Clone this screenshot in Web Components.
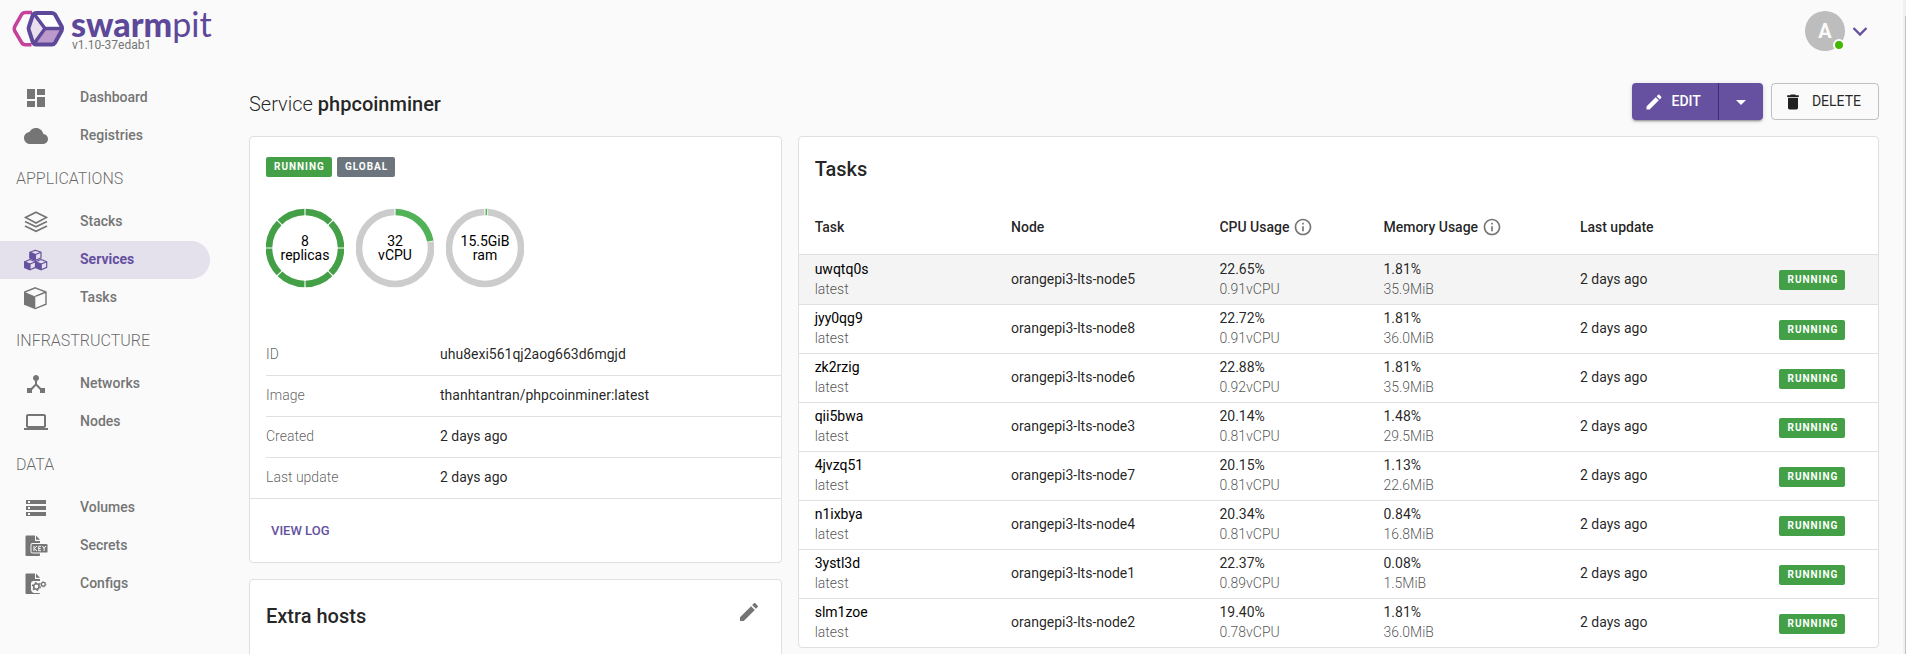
<!DOCTYPE html>
<html lang="en">
<head>
<meta charset="utf-8">
<title>Swarmpit - Service phpcoinminer</title>
<style>
  html, body { margin: 0; height: 100%; background: #fafafa; overflow: hidden; }
  body { font: 400 14px/20px Roboto, sans-serif; color: rgba(0,0,0,.87); }
</style>
</head>
<body>
<sp-app></sp-app>

<template id="t-app">
  <style>
    :host { display: grid; grid-template-columns: minmax(0, 1fr) 3px; height: 100%; overflow: hidden; }
    .page { min-height: 0; overflow: hidden; }
    .track { background: #f0f0f0; padding: 16px 0 0 2px; display: grid; }
    .thumb { background: #c1c1c1; }
    .top { box-sizing: border-box; display: flex; justify-content: space-between; padding: 10px 31px 0 12px; height: 52px; }
    .body { display: grid; grid-template-columns: 210px minmax(0, 1fr); column-gap: 39px; padding-right: 24px; }
    sp-nav { margin-top: 27px; }
    .bar { display: flex; align-items: center; gap: 8px; height: 37px; margin: 31px 0 16px; }
    h1 { flex: 1; margin: 0; font: 500 20px/24px Roboto, sans-serif; padding-top: 4px; }
    h1 span { font-weight: 300; }
    .grid { display: grid; grid-template-columns: repeat(12, minmax(0, 1fr)); gap: 16px; align-items: start; }
    .left { grid-column: span 4; display: grid; gap: 16px; }
    .right { grid-column: span 8; }
    .hosts { display: flex; align-items: flex-start; justify-content: space-between; padding: 12px 12px 60px 16px; }
    h2 { margin: 0; padding-top: 4px; font: 500 20px/40px Roboto, sans-serif; }
    .icon { border: 0; padding: 8px; background: none; color: #757575; display: flex; }
  </style>
  <div class="page">
  <header class="top"><sp-brand version="v1.10-37edab1"></sp-brand><sp-account letter="A"></sp-account></header>
  <div class="body">
    <sp-nav></sp-nav>
    <main>
      <div class="bar">
        <h1><span>Service</span> phpcoinminer</h1>
        <sp-split-button>Edit</sp-split-button>
        <sp-delete-button>Delete</sp-delete-button>
      </div>
      <div class="grid">
        <div class="left">
          <sp-card><sp-service></sp-service></sp-card>
          <sp-card><div class="hosts"><h2>Extra hosts</h2><button class="icon" aria-label="Edit extra hosts"><sp-icon name="edit"></sp-icon></button></div></sp-card>
        </div>
        <sp-card class="right"><sp-tasks></sp-tasks></sp-card>
      </div>
    </main>
  </div>
  </div>
  <div class="track"><div class="thumb"></div></div>
</template>

<template id="t-brand">
  <style>
    :host { display: flex; gap: 6px; }
    svg { width: 53px; height: 38px; display: block; }
    .txt { display: flex; flex-direction: column; }
    .word { font: 900 34px/28px Lato, sans-serif; color: #5d4899; height: 31px; }
    .word span { font-weight: 400; }
    .ver { font-size: 12px; line-height: 14px; color: #757575; padding-left: 1px; }
  </style>
  <svg viewBox="0 0 53 38" aria-hidden="true">
    <path d="M20 2.500H13.500Q10.800 2.500 9.500 4.700L3 16Q1.600 18.700 3 21.400L9.500 32.400Q10.800 34.700 13.500 34.700H19.500" fill="none" stroke="#c5429a" stroke-width="3.600"/>
    <path d="M18 5 16.500 18.500 27 32.500 40 34 50 18.500 40 4Z" fill="#fff"/>
    <path d="M21 6 16.800 18.500 22.500 31 33 18.500 24 5Z" fill="#e8deee"/>
    <path d="M33 18.500H49L41 33H24Z" fill="#bb9acb"/>
    <path d="M24 2.900H40Q42 2.900 43 4.600L49.700 16.500Q50.700 18.500 49.700 20.500L43 32.700Q42 34.400 40 34.400H24Q22 34.400 21 32.700L17 20.500Q16 18.500 17 16.500L21 4.600Q22 2.900 24 2.900Z" fill="none" stroke="#5d4899" stroke-width="4"/>
    <path d="M22.500 4.500 33 18.500 22.500 33M33 18.500H50" fill="none" stroke="#5d4899" stroke-width="3.400"/>
  </svg>
  <div class="txt"><div class="word">swarm<span>pit</span></div><div class="ver"></div></div>
</template>

<template id="t-account">
  <style>
    :host { display: block; }
    button { display: flex; align-items: center; gap: 3px; border: 0; padding: 0; background: none; color: #65519f; }
    .av { position: relative; width: 40px; height: 40px; margin-top: 1px; border-radius: 50%; background: #bdbdbd; color: #fafafa; font: 700 20px/41px Roboto, sans-serif; text-align: center; }
    .dot { position: absolute; right: 0; bottom: 0; width: 8px; height: 8px; border: 2px solid #fff; border-radius: 50%; background: #44b700; }
  </style>
  <button aria-label="Account"><span class="av"><span class="l"></span><span class="dot"></span></span><sp-icon name="chevron"></sp-icon></button>
</template>

<template id="t-nav">
  <style>
    :host { display: block; }
    nav { display: flex; flex-direction: column; }
    h3 { margin: 0; padding-left: 16px; font: 300 16px/47px Roboto, sans-serif; height: 48px; color: rgba(0,0,0,.6); text-transform: uppercase; }
    a { display: flex; align-items: center; gap: 32px; height: 38px; padding-left: 24px; border-radius: 0 19px 19px 0; color: #757575; font-weight: 500; text-decoration: none; }
    a span { padding-bottom: 2px; }
    a[aria-current] { background: #e4e0ec; color: #65519f; font-weight: 700; }
  </style>
  <nav></nav>
</template>

<template id="t-split">
  <style>
    :host { display: flex; border-radius: 4px; background: #65519f; box-shadow: 0 3px 1px -2px rgba(0,0,0,.2), 0 2px 2px rgba(0,0,0,.14), 0 1px 5px rgba(0,0,0,.12); }
    button { display: flex; align-items: center; justify-content: center; height: 37px; border: 0; background: none; color: #fff; font: 500 14px/24px Roboto, sans-serif; text-transform: uppercase; }
    .main { gap: 8px; padding: 0 17px 0 12px; border-right: 1px solid #3a2a80; }
    .more { width: 44px; padding: 0; }
    span { padding-bottom: 2px; }
  </style>
  <button class="main"><sp-icon name="edit" size="20"></sp-icon><span><slot></slot></span></button><button class="more" aria-label="More actions"><sp-icon name="drop"></sp-icon></button>
</template>

<template id="t-delete">
  <style>
    :host { display: block; }
    button { display: flex; align-items: center; gap: 9px; height: 37px; padding: 0 17px 0 11px; border: 1px solid rgba(0,0,0,.23); border-radius: 4px; background: none; color: rgba(0,0,0,.87); font: 400 14px/24px Roboto, sans-serif; text-transform: uppercase; }
    span { padding-bottom: 2px; }
  </style>
  <button><sp-icon name="trash" size="20"></sp-icon><span><slot></slot></span></button>
</template>

<template id="t-card">
  <style>:host { display: block; background: #fff; border: 1px solid #e0e0e0; border-radius: 4px; }</style>
  <slot></slot>
</template>

<template id="t-badge">
  <style>
    :host { display: inline-block; padding: 0 7px 0 8px; border-radius: 2px; background: #43a047; color: #fff; font: 700 10px/20px Roboto, sans-serif; letter-spacing: 1px; text-transform: uppercase; }
    :host([tone="grey"]) { background: #6c757d; }
  </style>
  <slot></slot>
</template>

<template id="t-ring">
  <style>
    :host { display: grid; width: 78px; height: 80px; place-items: center; color: #000; }
    svg, div { grid-area: 1 / 1; }
    svg { width: 78px; height: 80px; }
    div { font-size: 14px; line-height: 14px; text-align: center; white-space: pre-line; }
  </style>
  <svg viewBox="0 0 78 80" preserveAspectRatio="none" aria-hidden="true"></svg><div></div>
</template>

<template id="t-service">
  <style>
    :host { display: block; }
    .tags { display: flex; gap: 5px; padding: 20px 16px 0; }
    .rings { display: flex; gap: 12px; padding: 31px 16px 47px; }
    table { width: 100%; border-collapse: separate; border-spacing: 0; }
    th, td { box-sizing: border-box; padding: 0 0 2px; height: 41px; border-bottom: 1px solid #e0e0e0; text-align: left; vertical-align: middle; font-weight: 400; }
    th { width: 174px; color: rgba(0,0,0,.65); font-weight: 300; }
    .wrap { padding-left: 16px; border-bottom: 1px solid #e0e0e0; }
    tr:last-child > * { height: 40px; border-bottom: 0; }
    .act { padding: 13px; }
    a { display: inline-block; padding: 8px; color: #65519f; font-weight: 500; font-size: 13px; line-height: 21px; text-decoration: none; text-transform: uppercase; }
  </style>
  <div class="tags"><sp-badge>Running</sp-badge><sp-badge tone="grey">Global</sp-badge></div>
  <div class="rings"><sp-ring kind="replicas" top="8" bottom="replicas"></sp-ring><sp-ring value="22" top="32" bottom="vCPU"></sp-ring><sp-ring value="1" top="15.5GiB" bottom="ram"></sp-ring></div>
  <div class="wrap"><table>
    <tr><th scope="row">ID</th><td>uhu8exi561qj2aog663d6mgjd</td></tr>
    <tr><th scope="row">Image</th><td>thanhtantran/phpcoinminer:latest</td></tr>
    <tr><th scope="row">Created</th><td>2 days ago</td></tr>
    <tr><th scope="row">Last update</th><td>2 days ago</td></tr>
  </table></div>
  <div class="act"><a href="#log">View log</a></div>
</template>

<template id="t-tasks">
  <style>
    :host { display: block; }
    h2 { margin: 0; padding: 12px 16px; font: 500 20px/40px Roboto, sans-serif; }
    table { width: 100%; table-layout: fixed; border-collapse: separate; border-spacing: 0; }
    th, td { box-sizing: border-box; padding: 0 16px 2px; text-align: left; border-bottom: 1px solid #e0e0e0; }
    th { height: 54px; font-weight: 500; }
    th span { display: flex; align-items: center; gap: 4px; }
    td { height: 49px; vertical-align: middle; }
    tbody tr:first-child td { height: 50px; }
    tbody tr:last-child td { height: 48px; border-bottom: 0; }
    td:last-child { padding: 0 17px; }
    td b, td small { display: block; font-size: 14px; line-height: 20px; font-weight: 400; }
    td:first-child b { color: #000; }
    td small { font-weight: 300; color: rgba(0,0,0,.7); }
    tbody tr:first-child { background: #f4f4f4; }
    sp-icon { color: #757575; }
    sp-badge { vertical-align: middle; }
  </style>
  <h2>Tasks</h2>
  <table>
    <colgroup><col style="width:18.2%"><col style="width:19.3%"><col style="width:15.2%"><col style="width:18.2%"><col style="width:18.4%"><col></colgroup>
    <thead><tr><th>Task</th><th>Node</th><th><span>CPU Usage <sp-icon name="info" size="20"></sp-icon></span></th><th><span>Memory Usage <sp-icon name="info" size="20"></sp-icon></span></th><th>Last update</th><th></th></tr></thead>
    <tbody></tbody>
  </table>
</template>

<script>
  const ICONS = {
    dashboard: '<path d="M3 13h8V3H3v10zm0 8h8v-6H3v6zm10 0h8V11h-8v10zm0-18v6h8V3h-8z"/>',
    cloud: '<path d="M19.350 10.040C18.670 6.590 15.640 4 12 4 9.110 4 6.600 5.640 5.350 8.040 2.340 8.360 0 10.910 0 14c0 3.310 2.690 6 6 6h13c2.760 0 5-2.240 5-5 0-2.640-2.050-4.780-4.650-4.960z"/>',
    stacks: '<path d="M12 2.200 22.500 7.500 12 13 1.500 7.500ZM1 11.500l11 5.300 11-5.300M1 16l11 5.300L23 16" fill="none" stroke="currentColor" stroke-width="1.600"/>',
    services: '<g stroke="currentColor" stroke-width="1.200" stroke-linejoin="round"><path d="M11.500 2.200 17 4.300V10l-5.500 2.200L6 10V4.300ZM6 11.500l5.500 2.200v5.700L6 21.700.700 19.400v-5.700ZM17.200 11.500l5.500 2.200v5.700l-5.500 2.300-5.500-2.300v-5.700Z" fill="#e4e0ec"/><path d="M6 4.300 11.500 6.500V12.200L6 10ZM.700 13.700 6 16v5.700L.700 19.400ZM11.700 13.700 17.200 16v5.700L11.700 19.400Z"/><path d="M11.500 6.500 17 4.300M6 16l5.500-2.300M17.200 16l5.500-2.300" fill="none"/></g>',
    tasks: '<path d="M11.300 1.800 22 6V18.200L11.300 22.600.700 18.200V6ZM11.300 10.400 22 6" fill="none" stroke="currentColor" stroke-width="1.400"/><path d="M.700 6 11.300 10.400V22.600L.700 18.200Z"/>',
    hub: '<path d="M17 16l-4-4V8.820C14.160 8.400 15 7.300 15 6c0-1.660-1.340-3-3-3S9 4.340 9 6c0 1.300.840 2.400 2 2.820V12l-4 4H3v5h5v-3.050l4-4.200 4 4.200V21h5v-5h-4z"/>',
    laptop: '<path d="M20 18c1.100 0 1.990-.900 1.990-2L22 6c0-1.100-.900-2-2-2H4c-1.100 0-2 .900-2 2v10c0 1.100.900 2 2 2H0v2h24v-2h-4zM4 6h16v10H4V6z"/>',
    storage: '<path d="M2 20h20v-4H2v4zm2-3h2v2H4v-2zM2 4v4h20V4H2zm4 3H4V5h2v2zm-4 7h20v-4H2v4zm2-3h2v2H4v-2z"/>',
    secrets: '<path d="M2.500 1.500H11V7h5v2H8.500Q6.500 9 6.500 11V17q0 2.500 2.500 2.500h7V21q0 1-1 1H2.500q-1 0-1-1V2.500q0-1 1-1ZM12 1.500l4 4.300h-4Z"/><rect x="7.500" y="10" width="16" height="8.600" rx="1.200"/><path d="M10 12v5M13 12l-2.700 2.500L13 17M17 12.300h-2.300v4.400H17M14.700 14.500h2M18.500 12l1.600 2.500 1.600-2.500M20.100 14.500V17" fill="none" stroke="#fafafa" stroke-width="1"/>',
    configs: '<path d="M2.500 1.500H11V7h5v2H9.500Q7 9 7 11.500V17q0 3 3 4h6q0 1-1 1H2.500q-1 0-1-1V2.500q0-1 1-1ZM12 1.500l4 4.300h-4Z"/><circle cx="12.400" cy="14.500" r="2.700" fill="none" stroke="currentColor" stroke-width="1.600"/><circle cx="12.400" cy="14.500" r="4" fill="none" stroke="currentColor" stroke-width="1.200" stroke-dasharray="1.800 2.389"/><circle cx="19.300" cy="12.300" r="1.900" fill="none" stroke="currentColor" stroke-width="1.300"/><circle cx="19.300" cy="12.300" r="2.700" fill="none" stroke="currentColor" stroke-width=".800" stroke-dasharray="1.200 1.627"/>',
    edit: '<path d="M3 17.250V21h3.750L17.810 9.940l-3.750-3.750L3 17.250zM20.710 7.040c.390-.390.390-1.020 0-1.410l-2.340-2.340c-.390-.390-1.020-.390-1.410 0l-1.830 1.830 3.750 3.750 1.830-1.830z"/>',
    trash: '<path d="M6 19c0 1.100.900 2 2 2h8c1.100 0 2-.900 2-2V7H6v12zM19 4h-3.500l-1-1h-5l-1 1H5v2h14V4z"/>',
    drop: '<path d="M7 10l5 5 5-5z"/>',
    chevron: '<path d="M5.500 9 12 15.500 18.500 9" fill="none" stroke="currentColor" stroke-width="2.400"/>',
    info: '<path d="M11 17h2v-6h-2v6zm1-15C6.480 2 2 6.480 2 12s4.480 10 10 10 10-4.480 10-10S17.520 2 12 2zm0 18c-4.410 0-8-3.590-8-8s3.590-8 8-8 8 3.590 8 8-3.590 8-8 8zM11 9h2V7h-2v2z"/>'
  };

  const define = (name, template, setup) => customElements.define(name, class extends HTMLElement {
    connectedCallback() {
      if (this.shadowRoot) return;
      const root = this.attachShadow({ mode: 'open' });
      if (template) root.append(document.getElementById(template).content.cloneNode(true));
      if (setup) setup(root, this);
    }
  });

  define('sp-icon', null, (root, el) => {
    const s = el.getAttribute('size') || 24;
    root.innerHTML = `<style>:host{display:block;flex:none}svg{display:block;fill:currentColor}</style><svg width="${s}" height="${s}" viewBox="0 0 24 24" aria-hidden="true">${ICONS[el.getAttribute('name')]}</svg>`;
  });
  define('sp-card', 't-card');
  define('sp-badge', 't-badge');
  define('sp-split-button', 't-split');
  define('sp-delete-button', 't-delete');
  define('sp-brand', 't-brand', (root, el) => { root.querySelector('.ver').textContent = el.getAttribute('version'); });
  define('sp-account', 't-account', (root, el) => { root.querySelector('.l').textContent = el.getAttribute('letter'); });

  define('sp-nav', 't-nav', root => {
    const items = [
      ['Dashboard', 'dashboard'], ['Registries', 'cloud'],
      'Applications', ['Stacks', 'stacks'], ['Services', 'services'], ['Tasks', 'tasks'],
      'Infrastructure', ['Networks', 'hub'], ['Nodes', 'laptop'],
      'Data', ['Volumes', 'storage'], ['Secrets', 'secrets'], ['Configs', 'configs']
    ];
    root.querySelector('nav').innerHTML = items.map(i => typeof i === 'string'
      ? `<h3>${i}</h3>`
      : `<a href="#${i[0].toLowerCase()}"${i[0] === 'Services' ? ' aria-current="page"' : ''}><sp-icon name="${i[1]}"></sp-icon><span>${i[0]}</span></a>`).join('');
  });

  define('sp-ring', 't-ring', (root, el) => {
    const ring = (color, extra = '') => `<circle cx="39" cy="40" r="36" fill="none" stroke="${color}" stroke-width="6.600" pathLength="100" transform="rotate(-90 39 40)" ${extra}/>`;
    const value = Number(el.getAttribute('value'));
    root.querySelector('svg').innerHTML = el.getAttribute('kind') === 'replicas'
      ? ring('#43a047', 'stroke-dasharray="12 .5" stroke-dashoffset="-.25"')
      : ring('#ccc', `stroke-dasharray="${99.5 - value} 200" stroke-dashoffset="-${value + .25}"`)
        + ring('#52b257', `stroke-dasharray="${value - .3} 200" stroke-dashoffset="-.25"`);
    root.querySelector('div').textContent = el.getAttribute('top') + '\n' + el.getAttribute('bottom');
  });

  define('sp-service', 't-service');

  define('sp-tasks', 't-tasks', root => {
    const rows = [
      ['uwqtq0s', 5, '22.65%', '0.91', '1.81%', '35.9'],
      ['jyy0qg9', 8, '22.72%', '0.91', '1.81%', '36.0'],
      ['zk2rzig', 6, '22.88%', '0.92', '1.81%', '35.9'],
      ['qii5bwa', 3, '20.14%', '0.81', '1.48%', '29.5'],
      ['4jvzq51', 7, '20.15%', '0.81', '1.13%', '22.6'],
      ['n1ixbya', 4, '20.34%', '0.81', '0.84%', '16.8'],
      ['3ystl3d', 1, '22.37%', '0.89', '0.08%', '1.5'],
      ['slm1zoe', 2, '19.40%', '0.78', '1.81%', '36.0']
    ];
    root.querySelector('tbody').innerHTML = rows.map(([id, node, cpu, vcpu, mem, mib]) =>
      `<tr><td><b>${id}</b><small>latest</small></td><td>orangepi3-lts-node${node}</td><td><b>${cpu}</b><small>${vcpu}vCPU</small></td><td><b>${mem}</b><small>${mib}MiB</small></td><td>2 days ago</td><td><sp-badge>Running</sp-badge></td></tr>`).join('');
  });

  define('sp-app', 't-app');
</script>
</body>
</html>
